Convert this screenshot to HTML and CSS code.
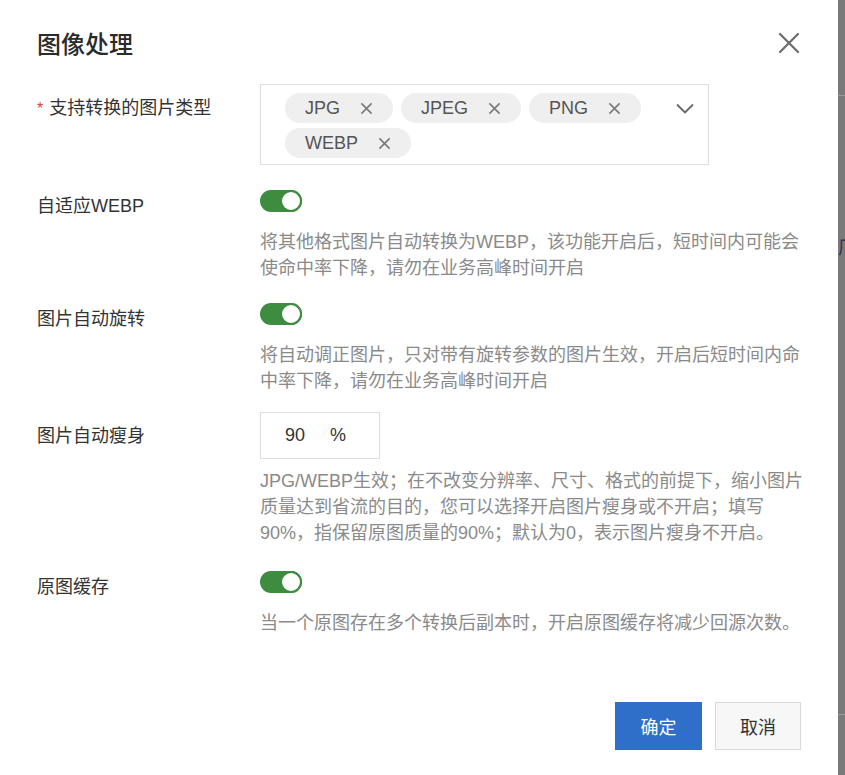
FILE: index.html
```html
<!DOCTYPE html>
<html lang="zh-CN">
<head>
<meta charset="utf-8">
<title>图像处理</title>
<link rel="stylesheet" href="styles.css">
</head>
<body>
<div class="dialog">
  <div class="header">
    <h1 class="title">图像处理</h1>
    <svg class="close" width="22" height="22" viewBox="0 0 22 22"><path d="M2 2L20 20M20 2L2 20" stroke="#6b6b6b" stroke-width="2.2" stroke-linecap="round" fill="none"/></svg>
  </div>

  <div class="form">
    <div class="item">
      <div class="label"><span class="req">*</span>支持转换的图片类型</div>
      <div class="control">
        <div class="select">
          <div class="tags">
            <span class="tag">JPG<svg class="tag-x" viewBox="0 0 14 14"><path d="M1.5 1.5L12.5 12.5M12.5 1.5L1.5 12.5" stroke="#777" stroke-width="1.6" fill="none"/></svg></span>
            <span class="tag">JPEG<svg class="tag-x" viewBox="0 0 14 14"><path d="M1.5 1.5L12.5 12.5M12.5 1.5L1.5 12.5" stroke="#777" stroke-width="1.6" fill="none"/></svg></span>
            <span class="tag">PNG<svg class="tag-x" viewBox="0 0 14 14"><path d="M1.5 1.5L12.5 12.5M12.5 1.5L1.5 12.5" stroke="#777" stroke-width="1.6" fill="none"/></svg></span>
            <span class="tag">WEBP<svg class="tag-x" viewBox="0 0 14 14"><path d="M1.5 1.5L12.5 12.5M12.5 1.5L1.5 12.5" stroke="#777" stroke-width="1.6" fill="none"/></svg></span>
          </div>
          <svg class="chevron" width="18" height="11" viewBox="0 0 18 11"><path d="M1 1.5L9 9.5L17 1.5" stroke="#666" stroke-width="1.8" fill="none"/></svg>
        </div>
      </div>
    </div>

    <div class="item item-tight">
      <div class="label">自适应WEBP</div>
      <div class="control">
        <div class="switch-wrap"><span class="switch"><span class="knob"></span></span></div>
        <p class="desc">将其他格式图片自动转换为WEBP，该功能开启后，短时间内可能会使命中率下降，请勿在业务高峰时间开启</p>
      </div>
    </div>

    <div class="item item-loose">
      <div class="label">图片自动旋转</div>
      <div class="control">
        <div class="switch-wrap"><span class="switch"><span class="knob"></span></span></div>
        <p class="desc">将自动调正图片，只对带有旋转参数的图片生效，开启后短时间内命中率下降，请勿在业务高峰时间开启</p>
      </div>
    </div>

    <div class="item">
      <div class="label">图片自动瘦身</div>
      <div class="control">
        <div class="num-input"><span class="num">90</span><span class="unit">%</span></div>
        <p class="desc">JPG/WEBP生效；在不改变分辨率、尺寸、格式的前提下，缩小图片质量达到省流的目的，您可以选择开启图片瘦身或不开启；填写90%，指保留原图质量的90%；默认为0，表示图片瘦身不开启。</p>
      </div>
    </div>

    <div class="item">
      <div class="label">原图缓存</div>
      <div class="control">
        <div class="switch-wrap"><span class="switch"><span class="knob"></span></span></div>
        <p class="desc">当一个原图存在多个转换后副本时，开启原图缓存将减少回源次数。</p>
      </div>
    </div>
  </div>

  <div class="footer">
    <button class="btn btn-primary">确定</button>
    <button class="btn btn-default">取消</button>
  </div>
</div>
<div class="backdrop">
  <div class="bd-line bd-line-top"></div>
  <div class="bd-glyph">厂</div>
  <div class="bd-line bd-line-bottom"></div>
</div>
</body>
</html>
```

FILE: styles.css
```css
* { box-sizing: border-box; }
html {
  margin: 0;
  padding: 0;
  background: #7e7e7e;
}
body {
  margin: 0;
  padding: 0;
  width: 845px;
  height: 775px;
  display: flex;
  overflow: hidden;
  font-family: "Liberation Sans", "Noto Sans CJK SC", sans-serif;
  background: #7e7e7e;
}
.dialog {
  flex: 0 0 838px;
  width: 838px;
  height: 775px;
  background: #fff;
  padding: 0 37px 25px 37px;
  display: flex;
  flex-direction: column;
}
.header {
  display: flex;
  justify-content: space-between;
  align-items: center;
  padding-top: 27px;
  height: 59px;
}
.title {
  margin: 0;
  font-size: 24px;
  line-height: 32px;
  font-weight: 500;
  color: #2b2b2b;
  font-family: "Noto Sans CJK SC", sans-serif;
}
.close { margin-right: 1px; }

.form { margin-top: 25px; }
.item {
  display: grid;
  grid-template-columns: 223px minmax(0, 1fr);
  margin-bottom: 17px;
}
.item-tight { margin-bottom: 14px; }
.item-loose { margin-bottom: 18px; }
.label {
  padding-top: 11px;
  font-size: 18px;
  line-height: 26px;
  color: #333;
}
.req { color: #e0403a; margin-right: 6px; font-size: 16px; }

.select {
  width: 449px;
  border: 1px solid #dedede;
  padding: 8px 14px 6px 24px;
  display: flex;
  align-items: flex-start;
}
.tags {
  flex: 1;
  display: flex;
  flex-wrap: wrap;
  gap: 5px 8px;
}
.tag {
  height: 30px;
  border-radius: 15px;
  background: #efefef;
  padding: 0 20px;
  display: inline-flex;
  align-items: center;
  gap: 20px;
  font-size: 18px;
  color: #555;
}
.tag-x { width: 13px; height: 13px; }
.chevron { margin-top: 10px; }

.switch-wrap { padding: 8px 0; height: 38px; }
.switch {
  display: flex;
  width: 42px;
  height: 22px;
  border-radius: 11px;
  background: #3d8c40;
}
.knob {
  margin-left: auto;
  width: 22px;
  height: 22px;
  border-radius: 50%;
  background: #fff;
  border: 2px solid #3d8c40;
}

.num-input {
  width: 120px;
  height: 47px;
  border: 1px solid #dedede;
  display: flex;
  align-items: center;
  padding-left: 24px;
  gap: 25px;
  font-size: 18px;
  color: #333;
}

.desc {
  margin: 9px 0 0 0;
  width: 548px;
  font-size: 18px;
  line-height: 26px;
  color: #8a8a8a;
}

.footer {
  margin-top: auto;
  display: flex;
  justify-content: flex-end;
  gap: 13px;
}
.btn {
  height: 48px;
  font-size: 18px;
  font-family: "Liberation Sans", "Noto Sans CJK SC", sans-serif;
  border-radius: 0;
  cursor: pointer;
}
.btn-primary {
  width: 87px;
  background: #2f6fca;
  color: #fff;
  border: 1px solid #2f6fca;
}
.btn-default {
  width: 86px;
  background: #f7f7f7;
  color: #333;
  border: 1px solid #d9d9d9;
}

.backdrop {
  flex: 0 0 7px;
  width: 7px;
  background: #7a7a7a;
  overflow: hidden;
  display: flex;
  flex-direction: column;
}
.bd-line { height: 1px; background: #9c9c9c; }
.bd-line-top { margin-top: 95px; }
.bd-glyph {
  margin-top: 140px;
  font-size: 18px;
  line-height: 20px;
  color: #2b3652;
  font-family: "Noto Sans CJK SC", sans-serif;
}
.bd-line-bottom { margin-top: 458px; }
```
